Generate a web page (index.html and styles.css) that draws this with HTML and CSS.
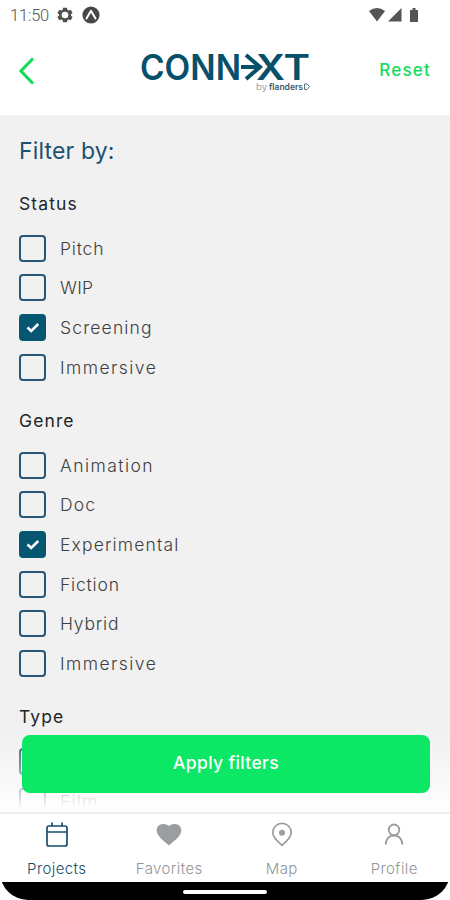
FILE: index.html
```html
<!DOCTYPE html>
<html lang="en">
<head>
<meta charset="utf-8">
<title>Filters</title>
<link rel="stylesheet" href="styles.css">
</head>
<body>
<div class="screen">
  <div class="statusbar">
    <span class="time">11:50</span>
    <svg class="gear" width="16" height="16" viewBox="0 0 24 24"><path fill="#505050" fill-rule="evenodd" d="M9 1h6l.6 3 2 1.2 3-1 2.800 4.800-2.400 2v2l2.400 2-2.800 4.800-3-1-2 1.200L15 23H9l-.6-3-2-1.200-3 1L.6 15 3 13v-2L.6 9l2.800-4.800 3 1 2-1.200zM12 7a5 5 0 1 0 0 10 5 5 0 0 0 0-10z"/></svg>
    <svg width="18" height="18" viewBox="0 0 18 18"><circle cx="9" cy="9" r="8.600" fill="#484848"/><path d="M4.500 12.500 9 4.800l4.500 7.700" fill="none" stroke="#fff" stroke-width="2" stroke-linecap="round" stroke-linejoin="round"/></svg>
    <svg class="signals" width="52" height="16" viewBox="0 0 52 16"><g fill="#555"><path d="M0 4Q8-2 16 4L8 14.500z"/><path d="M19 14.500 32.500 1v13.500z"/><path d="M41 3h2.500V1h3v2H49v12h-8z"/></g></svg>
  </div>
  <header class="header">
    <svg class="back" width="16" height="28" viewBox="0 0 16 28"><path d="M14 2.500 3 14l11 11.500" fill="none" stroke="#14dc5a" stroke-width="3.200" stroke-linecap="round"/></svg>
    <svg class="logo" width="172" height="52" viewBox="0 -10 172 52">
      <g class="wordmark">
        <text x="-1" y="27" textLength="101" lengthAdjust="spacingAndGlyphs">CONN</text>
        <text x="115" y="27" textLength="54" lengthAdjust="spacingAndGlyphs">XT</text>
      </g>
      <path d="M100 14h20M105 2l14 12-14 12" fill="none" stroke="#07506a" stroke-width="4"/>
      <text class="by" x="115" y="37" textLength="11" lengthAdjust="spacingAndGlyphs">by</text>
      <text class="flanders" x="128" y="37" textLength="34" lengthAdjust="spacingAndGlyphs">flanders</text>
      <path d="M163.500 31h2.500l2.500 2.500-2.500 3h-2.500z" fill="none" stroke="#58717e" stroke-width="1"/>
    </svg>
    <span class="reset">Reset</span>
  </header>
  <main class="content">
    <h1 class="title">Filter by:</h1>
    <section class="group">
      <h2>Status</h2>
      <div class="row"><i class="box"></i><span class="snug">Pitch</span></div>
      <div class="row"><i class="box"></i><span class="tight">WIP</span></div>
      <div class="row"><i class="box checked"><svg width="14" height="11" viewBox="0 0 14 11"><path d="m1.500 5.500 3.700 3.500 7-7"/></svg></i><span>Screening</span></div>
      <div class="row"><i class="box"></i><span class="wide">Immersive</span></div>
    </section>
    <section class="group">
      <h2>Genre</h2>
      <div class="row"><i class="box"></i><span class="wide">Animation</span></div>
      <div class="row"><i class="box"></i><span>Doc</span></div>
      <div class="row"><i class="box checked"><svg width="14" height="11" viewBox="0 0 14 11"><path d="m1.500 5.500 3.700 3.500 7-7"/></svg></i><span>Experimental</span></div>
      <div class="row"><i class="box"></i><span class="snug">Fiction</span></div>
      <div class="row"><i class="box"></i><span class="snug">Hybrid</span></div>
      <div class="row"><i class="box"></i><span class="wide">Immersive</span></div>
    </section>
    <section class="group">
      <h2>Type</h2>
      <div class="row"><i class="box"></i></div>
      <div class="row"><i class="box"></i><span>Film</span></div>
    </section>
    <div class="fade"><button class="apply">Apply filters</button></div>
  </main>
  <nav class="nav">
    <div class="tab active"><svg width="24" height="26" viewBox="0 0 24 26"><g fill="none" stroke="#164e6e" stroke-width="1.700"><rect x="2" y="4" width="20" height="20" rx="2"/><path d="M2 10h20M7 .5V4M17 .5V4"/></g></svg><span>Projects</span></div>
    <div class="tab"><svg width="26" height="26" viewBox="0 0 26 26"><path fill="#9a9ea1" d="M13 23.500C8 19 .7 14 .7 8.500.7 1 9.500.5 13 4 16.500.5 25.300 1 25.300 8.500 25.300 14 18 19 13 23.500z"/></svg><span>Favorites</span></div>
    <div class="tab"><svg width="24" height="26" viewBox="0 0 24 26"><path d="M12 23.500C8 19.500 2.800 16 2.800 10.500a9.200 9.200 0 0 1 18.400 0C21.200 16 16 19.500 12 23.500z" fill="none" stroke="#999da0" stroke-width="1.700"/><circle cx="12" cy="10.700" r="3" fill="#999da0"/></svg><span>Map</span></div>
    <div class="tab"><svg width="24" height="26" viewBox="0 0 24 26"><g fill="none" stroke="#999da0" stroke-width="1.800"><circle cx="12" cy="7.800" r="5.300"/><path d="M3.700 22.500c0-5 3-9 8.300-9s8.300 4 8.300 9"/></g></svg><span>Profile</span></div>
  </nav>
  <div class="homebar"><i></i></div>
</div>
</body>
</html>
```
FILE: styles.css
```css
* { box-sizing: border-box; }
body { margin: 0; background: #fff; font-family: Inter, sans-serif; }
.screen { width: 450px; height: 900px; display: flex; flex-direction: column; overflow: hidden; border-radius: 0 0 28px 28px; background: #fff; }
.statusbar { height: 30px; display: flex; align-items: center; padding: 0 29px 0 10px; }
.time { width: 47px; font: 300 16.5px Roboto, sans-serif; letter-spacing: -.2px; color: #555; }
.gear { margin-right: 9px; }
.signals { margin-left: auto; }
.header { height: 85px; display: flex; align-items: center; padding: 0 20px 4px 18px; }
.logo { margin: 0 0 4px 107px; overflow: visible; }
.wordmark { font: 600 35px Inter, sans-serif; fill: #07506a; }
.by { font: 300 9px Inter, sans-serif; fill: #758994; }
.flanders { font: 600 9px Inter, sans-serif; fill: #3c5968; }
.reset { margin-left: auto; font-size: 17px; font-weight: 500; letter-spacing: 1.200px; margin-right: -1px; padding-bottom: 2px; color: #15dc5c; }
.content { position: relative; height: 697px; overflow: hidden; background: #f1f1f1; padding: 20px 19px 0; }
.title { height: 32px; line-height: 32px; margin: 0 0 22px; font-size: 23px; font-weight: 400; letter-spacing: .15px; color: #1b5272; }
.group { margin-bottom: 19px; }
h2 { height: 30px; line-height: 30px; margin: 0 0 9.600px; font-size: 17.500px; font-weight: 400; letter-spacing: 1.100px; color: #202529; }
.row { height: 39.600px; display: flex; align-items: center; gap: 14px; font-size: 17.500px; font-weight: 300; letter-spacing: 1.150px; color: #3c4044; }
.snug { letter-spacing: .8px; }
.tight { letter-spacing: .25px; }
.wide { letter-spacing: 1.450px; }
.box { width: 27px; height: 27px; flex: none; border: 2px solid #285775; border-radius: 4px; display: flex; align-items: center; justify-content: center; }
.checked { background: #075671; border-color: #075671; }
.checked path { fill: none; stroke: #fff; stroke-width: 2.500; }
.fade { position: absolute; left: 0; right: 0; bottom: 0; height: 97px; padding: 20px 20px 0 22px; background: linear-gradient(rgba(255,255,255,0) 20%, rgba(255,255,255,.72) 80%, #fff 97%); }
.apply { display: block; width: 408px; height: 58px; border: 0; border-radius: 8px; background: #0ce865; color: #fff; font: 500 17.500px Inter, sans-serif; letter-spacing: .35px; padding: 0 0 4px; }
.nav { height: 70px; border-top: 2px solid #eee; display: grid; grid-template-columns: repeat(4, 112.500px); background: #fff; }
.tab { display: flex; flex-direction: column; align-items: center; padding: 8px 0 0 1px; font-size: 15px; font-weight: 300; letter-spacing: .4px; color: #929699; }
.tab span { line-height: 20px; margin-top: 11px; }
.active { color: #164e6e; }
.homebar { height: 18px; background: #000; display: flex; justify-content: center; padding-top: 8px; }
.homebar i { width: 84px; height: 4px; border-radius: 2px; background: #fff; }
```
